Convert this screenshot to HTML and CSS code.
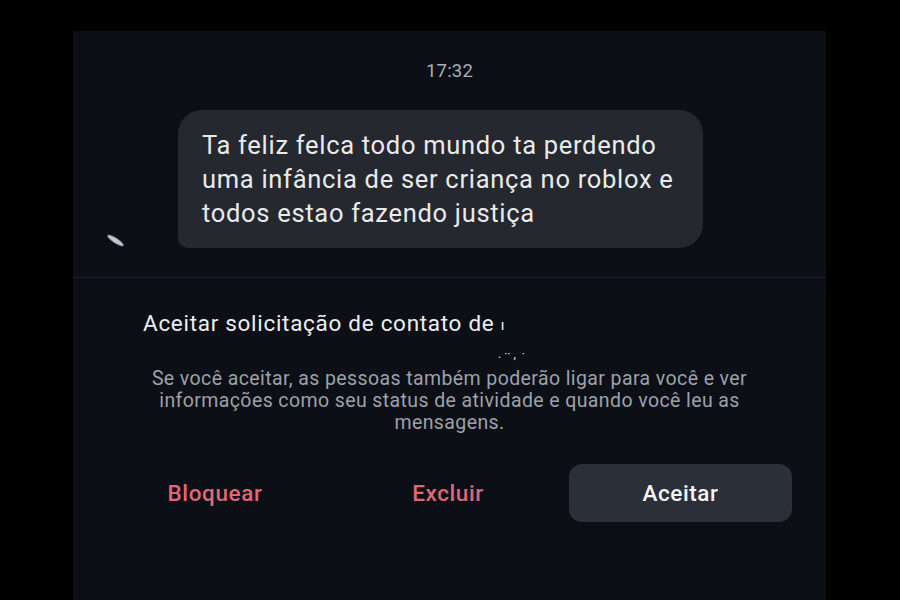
FILE: index.html
```html
<!DOCTYPE html>
<html lang="pt">
<head>
<meta charset="utf-8">
<link rel="stylesheet" href="styles.css">
</head>
<body>
<main class="panel">
  <div class="time">17:32</div>
  <div class="thread">
    <span class="glint"></span>
    <div class="bubble">Ta feliz felca todo mundo ta perdendo<br>uma infância de ser criança no roblox e<br>todos estao fazendo justiça</div>
  </div>
  <hr class="divider">
  <section class="request">
    <h1 class="title">Aceitar solicitação de contato de <span class="cut">ı</span></h1>
    <div class="specks">. ·· ,  ·</div>
    <p class="desc">Se você aceitar, as pessoas também poderão ligar para você e ver<br>informações como seu status de atividade e quando você leu as<br>mensagens.</p>
    <div class="actions">
      <button class="btn danger">Bloquear</button>
      <button class="btn danger">Excluir</button>
      <button class="btn primary">Aceitar</button>
    </div>
  </section>
</main>
</body>
</html>
```

FILE: styles.css
```css
html, body {
  margin: 0;
  padding: 0;
  background: #000;
  height: 100%;
  overflow: hidden;
}
body {
  font-family: Roboto, "Liberation Sans", sans-serif;
}
.panel {
  margin: 31px 0 0 73px;
  width: 753px;
  height: 569px;
  background: #0c0f16;
  display: flex;
  flex-direction: column;
}
.time {
  margin-top: 30px;
  text-align: center;
  color: #a9aeb6;
  font-size: 18.5px;
  line-height: 20px;
  letter-spacing: 0.2px;
}
.thread {
  position: relative;
  margin-top: 29px;
  padding-left: 105px;
}
.glint {
  position: absolute;
  left: 33px;
  top: 128px;
  width: 19px;
  height: 5px;
  border-radius: 50%;
  background: #c2c6cf;
  transform: rotate(33deg);
  filter: blur(0.5px);
}
.bubble {
  width: 525px;
  box-sizing: border-box;
  height: 138px;
  padding: 18px 0 0 24px;
  background: #25282e;
  border-radius: 24px 24px 24px 10px;
  color: #e9eaec;
  font-size: 25.5px;
  letter-spacing: 0.7px;
  line-height: 34px;
}
.divider {
  margin: 29px 0 0;
  border: 0;
  height: 1px;
  background: #1b1f27;
}
.request {
  display: flex;
  flex-direction: column;
}
.title {
  margin: 32px 0 0 70px;
  font-weight: normal;
  font-size: 22.5px;
  letter-spacing: 0.7px;
  line-height: 26px;
  color: #eceef0;
}
.cut {
  font-size: 15px;
  vertical-align: 1px;
}
.specks {
  margin: 13px 0 0 425px;
  height: 8px;
  font-size: 12px;
  line-height: 6px;
  color: #e0e2e6;
  white-space: pre;
}
.desc {
  margin: 9px 0 0;
  text-align: center;
  color: #9da1a9;
  font-size: 19.5px;
  letter-spacing: 0.4px;
  line-height: 22px;
}
.actions {
  margin-top: 30px;
  display: flex;
  align-items: center;
}
.btn {
  font-family: Roboto, "Liberation Sans", sans-serif;
  font-weight: 500;
  font-size: 22.5px;
  letter-spacing: 0.6px;
  border: 0;
  background: none;
  padding: 0;
  height: 58px;
}
.danger {
  color: #df6877;
}
.btn.danger:first-child {
  width: 140px;
  margin-left: 72px;
}
.btn.danger:nth-child(2) {
  width: 140px;
  margin-left: 93px;
}
.primary {
  margin-left: 51px;
  width: 223px;
  border-radius: 13px;
  background: #2a2f38;
  color: #f4f5f6;
}
```
